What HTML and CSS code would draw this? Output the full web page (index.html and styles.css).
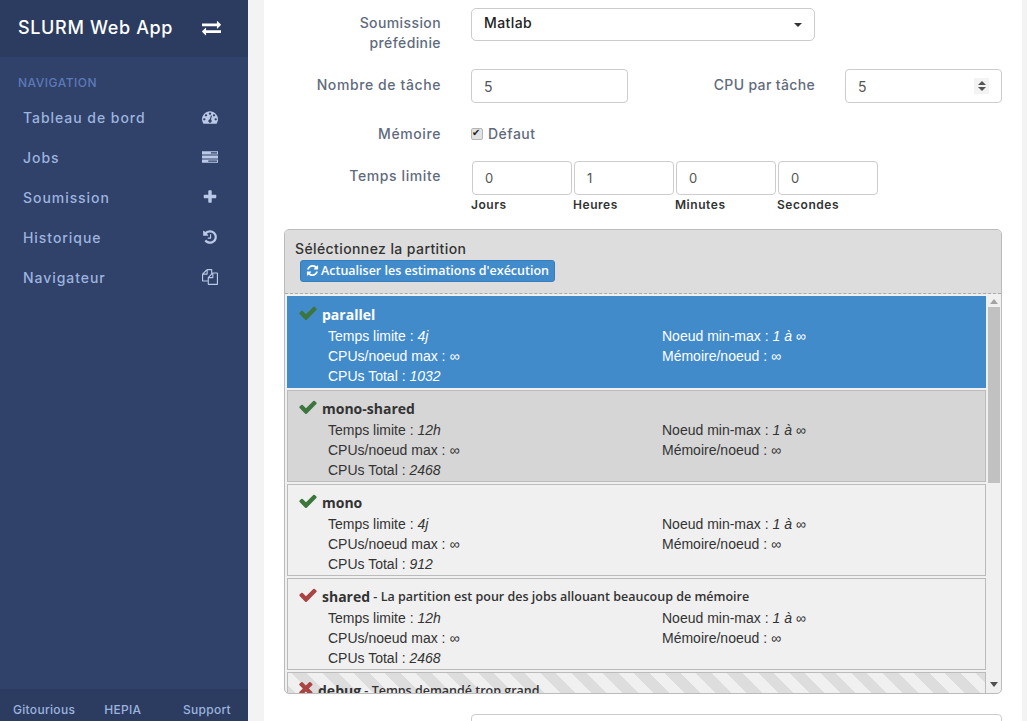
FILE: index.html
```html
<!DOCTYPE html>
<html lang="fr">
<head>
    <meta charset="UTF-8">
    <title>SLURM Web App</title>
    <link rel="stylesheet" href="styles.css">
</head>
<body>
    <svg class="icon-defs" xmlns="http://www.w3.org/2000/svg">
        <symbol id="i-exchange" viewBox="0 0 1792 1792"><path d="M1792 1184v192q0 13-9.500 22.500t-22.500 9.500h-1376v192q0 13-9.500 22.500t-22.500 9.500q-12 0-24-10l-319-320q-9-9-9-22 0-14 9-23l320-320q9-9 23-9 13 0 22.500 9.500t9.500 22.500v192h1376q13 0 22.500 9.500t9.500 22.500zm0-544q0 14-9 23l-320 320q-9 9-23 9-13 0-22.500-9.500t-9.500-22.500v-192h-1376q-13 0-22.500-9.500t-9.500-22.500v-192q0-13 9.500-22.500t22.500-9.500h1376v-192q0-14 9-23t23-9q12 0 24 10l319 319q9 9 9 23z"/></symbol>
        <symbol id="i-dashboard" viewBox="0 0 1792 1792"><path d="M384 1152q0-53-37.500-90.500t-90.500-37.500-90.500 37.500-37.500 90.500 37.500 90.500 90.500 37.500 90.500-37.500 37.500-90.500zm192-448q0-53-37.500-90.500t-90.500-37.500-90.500 37.500-37.500 90.500 37.500 90.500 90.500 37.500 90.500-37.500 37.500-90.500zm428 481l101-382q6-26-7.500-48.500t-38.500-29.500-48 6.500-30 39.500l-101 382q-60 5-107 43.500t-63 98.500q-20 77 20 146t117 89 146-20 89-117q16-60-6-117t-72-91zm660-33q0-53-37.500-90.500t-90.500-37.500-90.500 37.500-37.500 90.500 37.500 90.500 90.500 37.500 90.500-37.500 37.500-90.500zm-640-640q0-53-37.500-90.500t-90.500-37.500-90.500 37.500-37.500 90.500 37.500 90.500 90.500 37.500 90.500-37.500 37.500-90.500zm448 192q0-53-37.500-90.500t-90.500-37.500-90.500 37.500-37.500 90.500 37.500 90.500 90.500 37.500 90.500-37.500 37.500-90.500zm320 448q0 261-141 483-19 29-54 29h-1402q-35 0-54-29-141-221-141-483 0-182 71-348t191-286 286-191 348-71 348 71 286 191 191 286 71 348z"/></symbol>
        <symbol id="i-tasks" viewBox="0 0 1792 1792"><path d="M0 256h1792v352h-1792zM1000 368v128h680v-128zM0 720h1792v352h-1792zM0 1184h1792v352h-1792zM700 1296v128h980v-128z"/></symbol>
        <symbol id="i-plus" viewBox="0 0 1792 1792"><path d="M1600 736v192q0 40-28 68t-68 28h-416v416q0 40-28 68t-68 28h-192q-40 0-68-28t-28-68v-416h-416q-40 0-68-28t-28-68v-192q0-40 28-68t68-28h416v-416q0-40 28-68t68-28h192q40 0 68 28t28 68v416h416q40 0 68 28t28 68z"/></symbol>
        <symbol id="i-history" viewBox="0 0 1792 1792"><path d="M1664 896q0 156-61 298t-164 245-245 164-298 61q-172 0-327-72.500t-264-204.500q-7-10-6.500-22.500t8.500-20.500l137-138q10-9 25-9 16 2 23 12 73 95 179 147t225 52q104 0 198.500-40.500t163.500-109.500 109.500-163.500 40.500-198.500-40.500-198.500-109.500-163.500-163.500-109.500-198.500-40.500q-98 0-188 35.500t-160 101.500l137 138q31 30 14 69-17 40-59 40h-448q-26 0-45-19t-19-45v-448q0-42 40-59 39-17 69 14l130 129q107-101 244.500-156.500t284.500-55.500q156 0 298 61t245 164 164 245 61 298zm-640-288v448q0 14-9 23t-23 9h-320q-14 0-23-9t-9-23v-64q0-14 9-23t23-9h224v-352q0-14 9-23t23-9h64q14 0 23 9t9 23z"/></symbol>
        <symbol id="i-files" viewBox="0 0 1792 1792"><path d="M1696 384q40 0 68 28t28 68v1216q0 40-28 68t-68 28h-960q-40 0-68-28t-28-68v-288h-544q-40 0-68-28t-28-68v-672q0-40 20-88t48-76l408-408q28-28 76-48t88-20h416q40 0 68 28t28 68v328q68-40 128-40h416zm-544 213l-299 299h299v-299zm-640-384l-299 299h299v-299zm196 647l316-316v-416h-384v416q0 40-28 68t-68 28h-416v640h512v-256q0-40 20-88t48-76zm956 804v-1152h-384v416q0 40-28 68t-68 28h-416v640h896z"/></symbol>
        <symbol id="i-refresh" viewBox="0 0 1792 1792"><path d="M1639 1056q0 5-1 7-64 268-268 434.500t-478 166.500q-146 0-282.500-55t-243.500-157l-129 129q-19 19-45 19t-45-19-19-45v-448q0-26 19-45t45-19h448q26 0 45 19t19 45-19 45l-137 137q71 66 161 102t187 36q134 0 250-65t186-179q11-17 53-117 8-23 30-23h192q13 0 22.500 9.500t9.500 22.500zm25-800v448q0 26-19 45t-45 19h-448q-26 0-45-19t-19-45 19-45l138-138q-148-137-349-137-134 0-250 65t-186 179q-11 17-53 117-8 23-30 23h-199q-13 0-22.500-9.500t-9.500-22.500v-7q65-268 270-434.500t480-166.500q146 0 284 55.500t245 156.500l130-129q19-19 45-19t45 19 19 45z"/></symbol>
        <symbol id="i-check" viewBox="0 0 1792 1792"><path d="M1671 566q0 40-28 68l-724 724-136 136q-28 28-68 28t-68-28l-136-136-362-362q-28-28-28-68t28-68l136-136q28-28 68-28t68 28l294 295 656-657q28-28 68-28t68 28l136 136q28 28 28 68z"/></symbol>
        <symbol id="i-times" viewBox="0 0 1792 1792"><path d="M1298 1214q0 40-28 68l-136 136q-28 28-68 28t-68-28l-294-294-294 294q-28 28-68 28t-68-28l-136-136q-28-28-28-68t28-68l294-294-294-294q-28-28-28-68t28-68l136-136q28-28 68-28t68 28l294 294 294-294q28-28 68-28t68 28l136 136q28 28 28 68t-28 68l-294 294 294 294q28 28 28 68z"/></symbol>
    </svg>

    <div class="app">
        <!-- Sidebar -->
        <aside class="sidebar">
            <div class="brand">
                <span class="brand-name">SLURM Web App</span>
                <svg class="brand-icon"><use href="#i-exchange"/></svg>
            </div>
            <div class="nav-title">NAVIGATION</div>
            <nav class="nav">
                <a class="nav-link">Tableau de bord <svg class="nav-icon"><use href="#i-dashboard"/></svg></a>
                <a class="nav-link">Jobs <svg class="nav-icon"><use href="#i-tasks"/></svg></a>
                <a class="nav-link">Soumission <svg class="nav-icon"><use href="#i-plus"/></svg></a>
                <a class="nav-link">Historique <svg class="nav-icon"><use href="#i-history"/></svg></a>
                <a class="nav-link">Navigateur <svg class="nav-icon"><use href="#i-files"/></svg></a>
            </nav>
            <div class="side-footer">
                <a>Gitourious</a>
                <a>HEPIA</a>
                <a class="side-footer-end">Support</a>
            </div>
        </aside>
        <div class="gutter"></div>

        <!-- Form -->
        <main class="content">
            <div class="row">
                <label class="row-label row-label-double">Soumission<br>préfédinie</label>
                <div class="select-box">Matlab<span class="caret"></span></div>
            </div>
            <div class="row row-tasks">
                <label class="row-label row-label-low">Nombre de tâche</label>
                <input class="field field-small" type="text" value="5">
                <label class="row-label row-label-wide">CPU par tâche</label>
                <div class="spin-wrap">
                    <input class="field field-small" type="text" value="5">
                    <span class="spin"><span class="spin-up"></span><span class="spin-down"></span></span>
                </div>
            </div>
            <div class="row row-memory">
                <label class="row-label">Mémoire</label>
                <label class="check"><input type="checkbox" checked> Défaut</label>
            </div>
            <div class="row">
                <label class="row-label">Temps limite</label>
                <div class="time-fields">
                    <div class="time-cell"><input class="field field-time" type="text" value="0"><span>Jours</span></div>
                    <div class="time-cell"><input class="field field-time" type="text" value="1"><span>Heures</span></div>
                    <div class="time-cell"><input class="field field-time" type="text" value="0"><span>Minutes</span></div>
                    <div class="time-cell"><input class="field field-time" type="text" value="0"><span>Secondes</span></div>
                </div>
            </div>

            <section class="panel">
                <div class="panel-head">
                    <div class="panel-title">Séléctionnez la partition</div>
                    <button class="btn-refresh"><svg class="btn-icon"><use href="#i-refresh"/></svg>Actualiser les estimations d'exécution</button>
                </div>
                <div class="panel-body">
                    <div class="partitions">
                        <div class="part part-active">
                            <div class="part-title"><svg class="ok"><use href="#i-check"/></svg><b>parallel</b></div>
                            <div class="part-info">
                                <span>Temps limite : <i>4j</i></span><span>Noeud min-max : <i>1 à ∞</i></span>
                                <span>CPUs/noeud max : ∞</span><span>Mémoire/noeud : ∞</span>
                                <span>CPUs Total : <i>1032</i></span>
                            </div>
                        </div>
                        <div class="part part-hover">
                            <div class="part-title"><svg class="ok"><use href="#i-check"/></svg><b>mono-shared</b></div>
                            <div class="part-info">
                                <span>Temps limite : <i>12h</i></span><span>Noeud min-max : <i>1 à ∞</i></span>
                                <span>CPUs/noeud max : ∞</span><span>Mémoire/noeud : ∞</span>
                                <span>CPUs Total : <i>2468</i></span>
                            </div>
                        </div>
                        <div class="part">
                            <div class="part-title"><svg class="ok"><use href="#i-check"/></svg><b>mono</b></div>
                            <div class="part-info">
                                <span>Temps limite : <i>4j</i></span><span>Noeud min-max : <i>1 à ∞</i></span>
                                <span>CPUs/noeud max : ∞</span><span>Mémoire/noeud : ∞</span>
                                <span>CPUs Total : <i>912</i></span>
                            </div>
                        </div>
                        <div class="part">
                            <div class="part-title"><svg class="warn"><use href="#i-check"/></svg><b>shared</b><small> - La partition est pour des jobs allouant beaucoup de mémoire</small></div>
                            <div class="part-info">
                                <span>Temps limite : <i>12h</i></span><span>Noeud min-max : <i>1 à ∞</i></span>
                                <span>CPUs/noeud max : ∞</span><span>Mémoire/noeud : ∞</span>
                                <span>CPUs Total : <i>2468</i></span>
                            </div>
                        </div>
                        <div class="part part-off">
                            <div class="part-title"><svg class="warn warn-x"><use href="#i-times"/></svg><b>debug</b><small> - Temps demandé trop grand</small></div>
                        </div>
                    </div>
                    <div class="scrollbar">
                        <span class="arrow-up"></span>
                        <span class="thumb"></span>
                        <span class="arrow-down"></span>
                    </div>
                </div>
            </section>

            <div class="row row-next">
                <div class="next-field"></div>
            </div>
        </main>
        <div class="edge"></div>
    </div>
</body>
</html>
```

FILE: styles.css
```css
* {
    box-sizing: border-box;
}
html, body {
    height: 100%;
    margin: 0;
    overflow: hidden;
}
body {
    background-color: #ffffff;
    color: #333333;
    font-family: Inter, "Open Sans", sans-serif;
    font-size: 14px;
}
.icon-defs {
    display: none;
}
.app {
    display: flex;
    height: 721px;
}

/* Sidebar */
.sidebar {
    width: 248px;
    flex: none;
    display: flex;
    flex-direction: column;
    background-color: #30416a;
    color: #9db4de;
}
.brand {
    height: 57px;
    flex: none;
    display: flex;
    align-items: center;
    justify-content: space-between;
    padding: 0 27px 2px 18px;
    background-color: #2c3c60;
    color: #ffffff;
}
.brand-name {
    font-size: 18px;
    font-weight: 500;
    letter-spacing: 0.65px;
}
.brand-icon {
    width: 19px;
    height: 19px;
    fill: #ffffff;
    stroke: #ffffff;
    stroke-width: 1px;
}
.nav-title {
    padding: 18px 0 0 18px;
    font-size: 12px;
    line-height: 16px;
    font-weight: 500;
    letter-spacing: 0.5px;
    color: #5c7ab8;
}
.nav {
    flex: 1;
    padding-top: 6px;
}
.nav-link {
    display: flex;
    align-items: center;
    justify-content: space-between;
    height: 40px;
    padding: 0 30px 0 23px;
    font-size: 14px;
    font-weight: 500;
    letter-spacing: 0.95px;
}
.nav-icon {
    width: 16px;
    height: 16px;
    fill: #b9c9e6;
}
.side-footer {
    height: 32px;
    flex: none;
    display: flex;
    align-items: center;
    gap: 29px;
    padding: 8px 17px 0 13px;
    background-color: #2c3c60;
    font-size: 12px;
    font-weight: 500;
    letter-spacing: 0.3px;
}
.side-footer-end {
    margin-left: auto;
}

/* Main column */
.gutter {
    width: 16px;
    flex: none;
    background-color: #f3f3f3;
}
.content {
    flex: 1;
    padding: 8px 20px 0 20px;
    overflow: hidden;
    color: #5f6b7d;
}
.edge {
    width: 5px;
    flex: none;
    background-color: #f3f3f3;
}
.row {
    display: flex;
    align-items: flex-start;
    margin-bottom: 16px;
}
.row-label {
    width: 157px;
    flex: none;
    margin-right: 30px;
    padding-top: 5px;
    text-align: right;
    font-size: 14px;
    line-height: 20px;
    font-weight: 500;
    letter-spacing: 0.6px;
}
.row-label-double {
    letter-spacing: 0.4px;
}
.row-label-low {
    padding-top: 6px;
}
.row-label-wide {
    width: 187px;
    padding-top: 6px;
    letter-spacing: 0.35px;
}
.row-tasks {
    margin-bottom: 21px;
}
.row-memory {
    margin-bottom: 17px;
}
.row-memory .row-label {
    padding-top: 0;
}
.select-box {
    position: relative;
    width: 344px;
    height: 33px;
    padding: 4px 12px;
    border: 1px solid #cccccc;
    border-radius: 5px;
    font-size: 14px;
    line-height: 20px;
    font-weight: 500;
    letter-spacing: 0.4px;
    color: #222222;
}
.caret {
    position: absolute;
    right: 12px;
    top: 14px;
    border-top: 4px solid #333333;
    border-left: 4px solid transparent;
    border-right: 4px solid transparent;
}
.field {
    height: 34px;
    padding: 6px 12px;
    border: 1px solid #cccccc;
    border-radius: 4px;
    background: #ffffff;
    font-family: Inter, "Open Sans", sans-serif;
    font-size: 14px;
    color: #555555;
}
.field-small {
    width: 157px;
    flex: none;
}
.field-time {
    display: block;
    width: 100px;
    margin-left: 1px;
    font-size: 13px;
}
.spin-wrap {
    position: relative;
}
.spin {
    position: absolute;
    top: 9px;
    right: 13px;
    width: 15px;
    height: 16px;
    display: flex;
    flex-direction: column;
    align-items: center;
    justify-content: center;
    gap: 2px;
    background-color: #f3f3f3;
}
.spin-up {
    border-bottom: 4px solid #555555;
    border-left: 4px solid transparent;
    border-right: 4px solid transparent;
}
.spin-down {
    border-top: 4px solid #555555;
    border-left: 4px solid transparent;
    border-right: 4px solid transparent;
}
.check {
    display: flex;
    align-items: center;
    font-size: 14px;
    line-height: 20px;
    font-weight: 500;
    letter-spacing: 0.5px;
}
.check input {
    appearance: none;
    position: relative;
    width: 12px;
    height: 12px;
    margin: 0 5px 0 0;
    border: 1px solid #b5b5b5;
    border-radius: 2px;
    background-color: #e2e2e2;
}
.check input::before {
    content: "✔";
    position: absolute;
    left: 0;
    top: -3px;
    font-family: "DejaVu Sans", sans-serif;
    font-size: 10px;
    line-height: 14px;
    color: #222222;
}
.time-fields {
    display: flex;
}
.time-cell {
    width: 102px;
}
.time-cell span {
    display: block;
    margin-top: 2px;
    font-size: 12px;
    line-height: 16px;
    font-weight: 600;
    letter-spacing: 0.55px;
    color: #333333;
}

/* Partition panel */
.panel {
    width: 718px;
    height: 465px;
    border: 1px solid #bbbbbb;
    border-radius: 5px;
    overflow: hidden;
    background-color: #f0f0f0;
    font-family: "Liberation Sans", Arial, sans-serif;
}
.panel-head {
    height: 64px;
    padding: 10px 10px 0 10px;
    background-color: #dddddd;
    border-bottom: 1px dashed #aaaaaa;
}
.panel-title {
    font-family: Inter, "Open Sans", sans-serif;
    font-size: 14px;
    line-height: 18px;
    font-weight: 500;
    letter-spacing: 0.4px;
    color: #333333;
}
.btn-refresh {
    display: flex;
    align-items: center;
    height: 22px;
    margin: 2px 0 0 5px;
    padding: 0 5px 2px 5px;
    border: 1px solid #357ebd;
    border-radius: 3px;
    background-color: #428bca;
    color: #ffffff;
    font-family: "Open Sans", sans-serif;
    font-size: 12.5px;
    font-weight: 600;
}
.btn-icon {
    width: 13px;
    height: 13px;
    margin-right: 2px;
    fill: #ffffff;
}
.panel-body {
    display: flex;
    height: 399px;
}
.partitions {
    flex: 1;
    padding: 2px 1px 0 2px;
    overflow: hidden;
}
.part {
    height: 92px;
    margin-bottom: 2px;
    padding: 8px 0 0 10px;
    border: 1px solid #bbbbbb;
    color: #333333;
    font-size: 14px;
    line-height: 20px;
}
.part-active {
    background-color: #428bca;
    border-color: #428bca;
    color: #ffffff;
}
.part-hover {
    background-color: #d6d6d6;
}
.part-off {
    background: repeating-linear-gradient(45deg, #dddddd, #dddddd 11px, #f0f0f0 11px, #f0f0f0 22px);
}
.part-title {
    display: flex;
    align-items: center;
    height: 20px;
    font-family: "Open Sans", sans-serif;
    white-space: pre;
}
.part-title b {
    font-size: 14px;
    font-weight: 700;
}
.part-title small {
    font-size: 12.5px;
    font-weight: 600;
}
.ok, .warn {
    width: 20px;
    height: 20px;
    margin: -4px 4px 0 0;
    fill: #3c763d;
}
.warn {
    fill: #a94442;
}
.warn-x {
    margin-right: 0;
}
.part-info {
    display: grid;
    grid-template-columns: 334px 1fr;
    padding-left: 30px;
    margin-top: 1px;
}
.scrollbar {
    width: 14px;
    flex: none;
    display: flex;
    flex-direction: column;
    align-items: center;
}
.arrow-up {
    margin-top: 5px;
    border-bottom: 5px solid #a3a3a3;
    border-left: 4px solid transparent;
    border-right: 4px solid transparent;
}
.thumb {
    width: 12px;
    height: 176px;
    margin-top: 3px;
    background-color: #c1c1c1;
}
.arrow-down {
    margin-top: auto;
    margin-bottom: 6px;
    border-top: 5px solid #505050;
    border-left: 4px solid transparent;
    border-right: 4px solid transparent;
}
.row-next {
    margin-top: 20px;
    padding-left: 187px;
}
.next-field {
    width: 531px;
    height: 34px;
    border: 1px solid #cccccc;
    border-radius: 4px;
}
```
